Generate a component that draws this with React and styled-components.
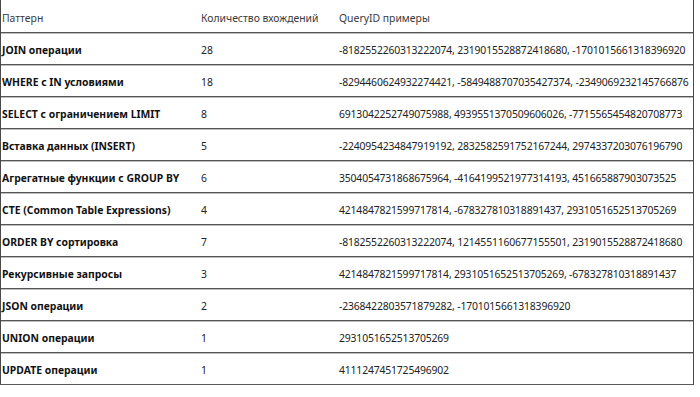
import React from 'react';
import styled, {createGlobalStyle} from 'styled-components';

const GlobalStyle = createGlobalStyle`
  html, body {
    margin: 0;
    padding: 0;
    background: #fff;
  }
  body {
    font-family: 'Noto Sans', 'Open Sans', sans-serif;
    color: #1f1f1f;
  }
`;

const Table = styled.div`
  width: 694px;
  box-sizing: border-box;
  border-left: 1px solid #4a4a4a;
  border-right: 1px solid #4a4a4a;
  border-bottom: 1px solid #5a5a5a;
  display: flex;
  flex-direction: column;
`;

const Row = styled.div`
  display: grid;
  grid-template-columns: 198px 138px 1fr;
  height: ${(p) => (p.$header ? 32 : 31)}px;
  align-items: center;
  border-top: ${(p) => (p.$header ? 'none' : '1px solid #555')};
  box-shadow: ${(p) => (p.$header ? 'none' : 'inset 0 1px 0 #bdbdbd')};
  font-size: 10.4px;
`;

const Cell = styled.div`
  padding: 3px 0 0 ${(p) => (p.$first ? 1 : 2)}px;
  white-space: nowrap;
  overflow: hidden;
  letter-spacing: ${(p) => (p.$ids ? '-0.16px' : '0')};
  font-weight: ${(p) => (p.$bold ? 700 : 400)};
  color: ${(p) => (p.$head ? '#3a3a3a' : p.$bold ? '#111' : '#222')};
`;

const rows = [
  ['JOIN операции', '28', '-8182552260313222074, 2319015528872418680, -1701015661318396920'],
  ['WHERE с IN условиями', '18', '-8294460624932274421, -5849488707035427374, -2349069232145766876'],
  ['SELECT с ограничением LIMIT', '8', '6913042252749075988, 4939551370509606026, -7715565454820708773'],
  ['Вставка данных (INSERT)', '5', '-2240954234847919192, 2832582591752167244, 2974337203076196790'],
  ['Агрегатные функции с GROUP BY', '6', '3504054731868675964, -4164199521977314193, 451665887903073525'],
  ['CTE (Common Table Expressions)', '4', '4214847821599717814, -678327810318891437, 2931051652513705269'],
  ['ORDER BY сортировка', '7', '-8182552260313222074, 1214551160677155501, 2319015528872418680'],
  ['Рекурсивные запросы', '3', '4214847821599717814, 2931051652513705269, -678327810318891437'],
  ['JSON операции', '2', '-2368422803571879282, -1701015661318396920'],
  ['UNION операции', '1', '2931051652513705269'],
  ['UPDATE операции', '1', '4111247451725496902'],
];

export default function App() {
  return (
    <>
      <GlobalStyle />
      <Table>
        <Row $header>
          <Cell $head $first>Паттерн</Cell>
          <Cell $head>Количество вхождений</Cell>
          <Cell $head>QueryID примеры</Cell>
        </Row>
        {rows.map(([name, count, ids]) => (
          <Row key={name}>
            <Cell $bold $first>{name}</Cell>
            <Cell>{count}</Cell>
            <Cell $ids>{ids}</Cell>
          </Row>
        ))}
      </Table>
    </>
  );
}
